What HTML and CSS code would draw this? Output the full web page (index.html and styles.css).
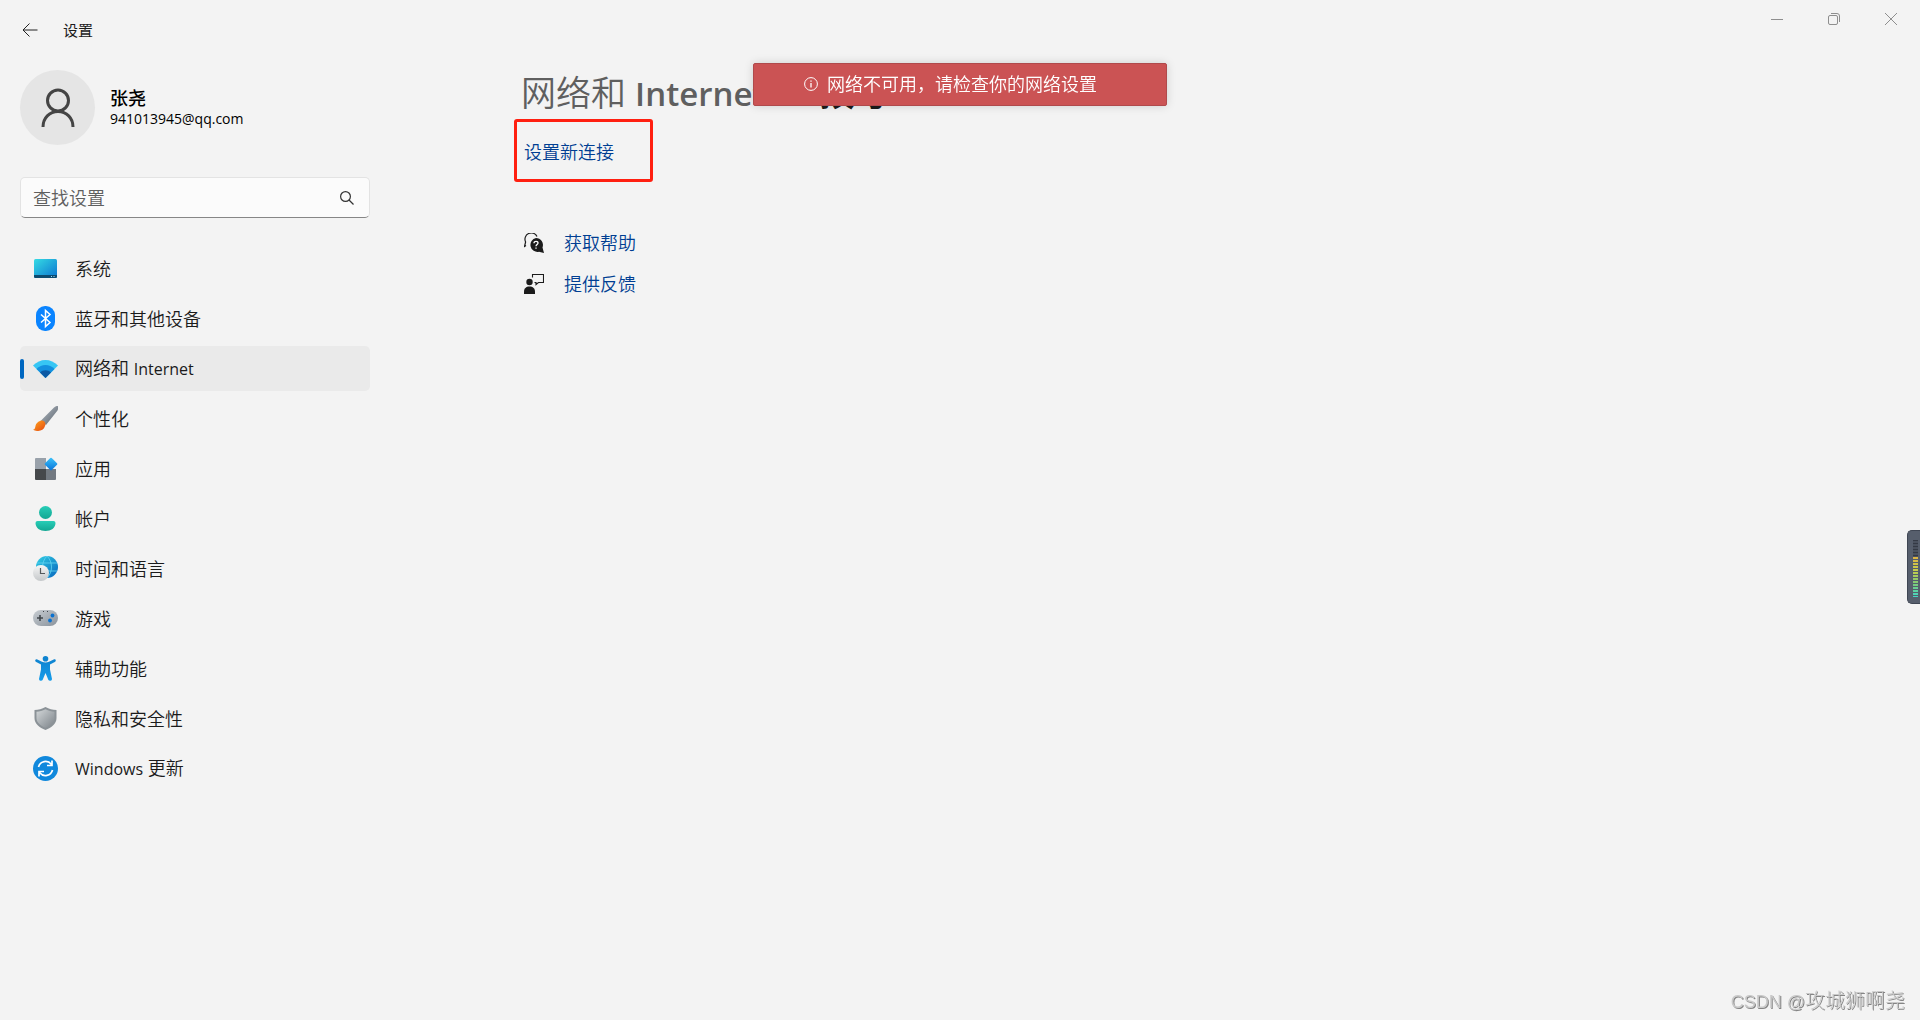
FILE: index.html
```html
<!DOCTYPE html>
<html lang="zh-CN">
<head>
    <meta charset="UTF-8">
    <meta name="viewport" content="width=device-width, initial-scale=1.0">
    <title>设置</title>
    <link rel="stylesheet" href="styles.css">
</head>
<body>
    <header class="titlebar">
        <button class="back" aria-label="返回">
            <svg width="16" height="14" viewBox="0 0 16 14" fill="none" stroke="#222"><path d="M15.500 7H1M7.500 0.500L1 7l6.500 6.500"/></svg>
        </button>
        <span class="appName">设置</span>
        <div class="controls">
            <button aria-label="最小化"><svg width="12" height="12" viewBox="0 0 12 12" fill="none" stroke="#8e8e8e"><path d="M0 6.500h12"/></svg></button>
            <button aria-label="还原"><svg width="12" height="12" viewBox="0 0 12 12" fill="none" stroke="#8e8e8e"><rect x=".5" y="2.500" width="9" height="9" rx="1.500"/><path d="M3 .500h6a2.500 2.500 0 0 1 2.500 2.500v6"/></svg></button>
            <button aria-label="关闭"><svg width="12" height="12" viewBox="0 0 12 12" fill="none" stroke="#8e8e8e"><path d="M0 0l12 12M12 0L0 12"/></svg></button>
        </div>
    </header>

    <div class="page">
        <aside class="sidebar">
            <div class="profile">
                <div class="avatar">
                    <svg width="34" height="40" viewBox="0 0 34 40" fill="none" stroke="#444" stroke-width="3"><circle cx="17" cy="12.500" r="10.500"/><path d="M2 39c0-9 6.500-15.500 15-15.500S32 30 32 39"/></svg>
                </div>
                <div>
                    <div class="userName">张尧</div>
                    <div class="email">941013945@qq.com</div>
                </div>
            </div>

            <label class="search">
                <input type="text" placeholder="查找设置" aria-label="查找设置">
                <svg width="14" height="14" viewBox="0 0 14 14" fill="none" stroke="#333" stroke-width="1.200"><circle cx="5.500" cy="5.500" r="4.900"/><path d="M9 9l4.500 4.500"/></svg>
            </label>

            <nav class="menu">
                <a href="#">
                    <svg class="icon" viewBox="0 0 25 25">
                        <defs><linearGradient id="sys" x1="0" y1="0" x2="1" y2="1"><stop offset="0" stop-color="#35dbe4"/><stop offset="1" stop-color="#0b74d0"/></linearGradient></defs>
                        <rect x="1" y="3" width="23" height="19" rx="1.500" fill="url(#sys)"/>
                        <path d="M1 19h23v1.500a1.500 1.500 0 0 1-1.500 1.500h-20A1.500 1.500 0 0 1 1 20.500z" fill="#0c4b70"/>
                        <path d="M18 20.500h1M20.500 20.500h1" stroke="#9fdcf5"/>
                    </svg>
                    <span>系统</span>
                </a>
                <a href="#">
                    <svg class="icon" viewBox="0 0 25 25">
                        <rect x="3" y="0" width="19" height="25" rx="9" fill="#0a84ff"/>
                        <path d="M8 8.500l9 8-4.500 4V4.500l4.500 4-9 8" fill="none" stroke="#fff" stroke-width="1.500"/>
                    </svg>
                    <span>蓝牙和其他设备</span>
                </a>
                <a href="#" class="active">
                    <svg class="icon" viewBox="0 0 25 25">
                        <path d="M0 9.500c7-7.500 18-7.500 25 0L12.500 22z" fill="#37c6f4"/>
                        <path d="M3.500 13c5-5.500 13-5.500 18 0l-9 9z" fill="#1490df"/>
                        <path d="M7 16.500c3-3 8-3 11 0L12.500 22z" fill="#0c59a4"/>
                    </svg>
                    <span>网络和 <span class="latin">Internet</span></span>
                </a>
                <a href="#">
                    <svg class="icon" viewBox="0 0 25 25">
                        <defs>
                            <linearGradient id="handle" x1="0" y1="0" x2="1" y2="1"><stop offset="0" stop-color="#b3bcc5"/><stop offset="1" stop-color="#59616a"/></linearGradient>
                            <linearGradient id="tip" x1="0" y1="0" x2="1" y2="1"><stop offset="0" stop-color="#ffa51d"/><stop offset="1" stop-color="#e54a13"/></linearGradient>
                        </defs>
                        <path d="M8 14.500L21 1.500Q24-.800 25 .300t-.500 4.200L13 19z" fill="url(#handle)"/>
                        <path d="M7 15c3.500-1.500 6.500 1.500 5 5-1.500 5.500-8.500 6-12 3.800 2.300-.500 2-2.300 2.600-4.300S4.500 16 7 15z" fill="url(#tip)"/>
                    </svg>
                    <span>个性化</span>
                </a>
                <a href="#">
                    <svg class="icon" viewBox="0 0 25 25">
                        <defs><linearGradient id="app" x1="0" y1="0" x2="1" y2="1"><stop offset="0" stop-color="#3cc3fa"/><stop offset="1" stop-color="#0872d8"/></linearGradient></defs>
                        <path d="M3 2h10v11H2V3a1 1 0 0 1 1-1z" fill="#99a1aa"/>
                        <path d="M2 13h11v11H3a1 1 0 0 1-1-1z" fill="#45484b"/>
                        <path d="M13 13h10v10a1 1 0 0 1-1 1h-9z" fill="#727981"/>
                        <rect x="13.300" y="3.300" width="9.500" height="9.500" rx="1" transform="rotate(45 18 8)" fill="url(#app)"/>
                    </svg>
                    <span>应用</span>
                </a>
                <a href="#">
                    <svg class="icon" viewBox="0 0 25 25">
                        <defs><linearGradient id="acc" x1="0" y1="0" x2="0" y2="1"><stop offset="0" stop-color="#28cdb7"/><stop offset="1" stop-color="#13a793"/></linearGradient></defs>
                        <circle cx="12.500" cy="6.500" r="6.500" fill="url(#acc)"/>
                        <path d="M4.500 15h16a2 2 0 0 1 2 2c0 5-4.500 8-10 8s-10-3-10-8a2 2 0 0 1 2-2z" fill="url(#acc)"/>
                    </svg>
                    <span>帐户</span>
                </a>
                <a href="#">
                    <svg class="icon" viewBox="0 0 25 25">
                        <defs>
                            <linearGradient id="globe" x1="0" y1="0" x2="1" y2="1"><stop offset="0" stop-color="#31d0e5"/><stop offset="1" stop-color="#0865bd"/></linearGradient>
                            <linearGradient id="clock" x1="0" y1="0" x2="0" y2="1"><stop offset="0" stop-color="#f6f6f6"/><stop offset="1" stop-color="#c5c8ca"/></linearGradient>
                        </defs>
                        <circle cx="14" cy="11" r="11" fill="url(#globe)"/>
                        <path d="M4 7h20M3 15h21M14 0c-6 6-6 16 0 22M14 0c6 6 6 16 0 22" fill="none" stroke="#64d5f3" stroke-width=".8"/>
                        <circle cx="8" cy="17" r="8" fill="url(#clock)"/>
                        <path d="M7.500 12v5.500H12" fill="none" stroke="#55595c" stroke-width="1.200"/>
                    </svg>
                    <span>时间和语言</span>
                </a>
                <a href="#">
                    <svg class="icon" viewBox="0 0 25 25">
                        <defs><linearGradient id="pad" x1="0" y1="0" x2="1" y2="1"><stop offset="0" stop-color="#c8cdd2"/><stop offset="1" stop-color="#89929b"/></linearGradient></defs>
                        <rect x="0" y="4" width="25" height="16" rx="8" fill="url(#pad)"/>
                        <path d="M4 12h6M7 9v6" stroke="#42474c" stroke-width="1.600"/>
                        <path d="M10 5.500h1M14 5.500h1" stroke="#42474c"/>
                        <circle cx="19.500" cy="9.500" r="1.900" fill="#0b72d0"/><circle cx="17" cy="14.500" r="1.900" fill="#0b72d0"/>
                    </svg>
                    <span>游戏</span>
                </a>
                <a href="#">
                    <svg class="icon" viewBox="0 0 25 25">
                        <defs><linearGradient id="man" x1="0" y1="0" x2="0" y2="1"><stop offset="0" stop-color="#0e83d0"/><stop offset="1" stop-color="#159cea"/></linearGradient></defs>
                        <circle cx="12.500" cy="2.800" r="2.800" fill="#0e83d0"/>
                        <path d="M3.800 3.200l5.200 2.600q3.500 1.200 7 0l5.200-2.600q1.500-.300 1.600 1t-1 1.800L17 8.600v5l2 9.400q0 1.600-1.500 1.800T15.400 24l-2.900-7-2.900 7q-.600 1-2.100.800T6 23l2-9.400v-5L3.200 6q-1.300-.700-1-1.800t1.600-1z" fill="url(#man)"/>
                    </svg>
                    <span>辅助功能</span>
                </a>
                <a href="#">
                    <svg class="icon" viewBox="0 0 25 25">
                        <defs><linearGradient id="shield" x1="0" y1="0" x2="1" y2="1"><stop offset="0" stop-color="#d3d7d9"/><stop offset="1" stop-color="#7c8389"/></linearGradient></defs>
                        <path d="M12.500 1c3.500 2 7 3 11 3v8c0 6-5 9.500-11 12C6.500 21.500 1.500 18 1.500 12V4c4 0 7.500-1 11-3z" fill="#8b9297"/>
                        <path d="M12.500 3.200c3 1.600 5.800 2.400 9 2.600V12c0 4.700-4 7.600-9 9.800-5-2.200-9-5.100-9-9.800V5.800c3.200-.200 6-1 9-2.600z" fill="url(#shield)"/>
                    </svg>
                    <span>隐私和安全性</span>
                </a>
                <a href="#">
                    <svg class="icon" viewBox="0 0 25 25">
                        <circle cx="12.500" cy="12.500" r="12.500" fill="#1088dc"/>
                        <path d="M5.500 11a7.300 7.300 0 0 1 12.800-2.800M19.500 14a7.300 7.300 0 0 1-12.800 2.800M19 4.500V9.500h-5M6 20.500v-5h5" fill="none" stroke="#fff" stroke-width="1.700"/>
                    </svg>
                    <span><span class="latin">Windows</span> 更新</span>
                </a>
            </nav>
        </aside>

        <main class="content">
            <h1><span class="parent">网络和 <b>Internet</b></span><span class="arrow">›</span><span class="current">拨号</span></h1>
            <div class="marked"><a href="#">设置新连接</a></div>
            <ul class="help">
                <li>
                    <svg width="20" height="20" viewBox="0 0 20 20">
                        <path d="M2 12.500L.500 13.500 1.600 9A6 6 0 0 1 13 3.500" fill="none" stroke="#1b1b1b" stroke-width="1.200"/>
                        <path d="M12 5a7 7 0 0 1 6.500 9.500L20 20l-5-1.200A7 7 0 1 1 12 5z" fill="#1b1b1b"/>
                        <path d="M10 10.200c0-2.600 4-2.400 4-.200 0 1.500-2 1.500-2 3.300M12 14.500v1.300" fill="none" stroke="#fff" stroke-width="1.300"/>
                    </svg>
                    <a href="#">获取帮助</a>
                </li>
                <li>
                    <svg width="20" height="20" viewBox="0 0 20 20">
                        <circle cx="5.500" cy="8" r="3.200" fill="#1b1b1b"/>
                        <path d="M0 20v-2.500C0 14.500 2 12.500 5.500 12.500S11 14.500 11 17.500V20z" fill="#1b1b1b"/>
                        <path d="M8.500 3.500v-3h11v8h-5l-2.500 2V8.500h-1.500" fill="none" stroke="#1b1b1b" stroke-width="1.100"/>
                    </svg>
                    <a href="#">提供反馈</a>
                </li>
            </ul>
        </main>
    </div>

    <div class="toast" role="alert">
        <svg width="14" height="14" viewBox="0 0 14 14" fill="none" stroke="#fff"><circle cx="7" cy="7" r="6.400"/><path d="M7 6v4.500M7 3.500v1.300" stroke-width="1.300"/></svg>
        网络不可用，请检查你的网络设置
    </div>

    <div class="meter"><div class="off"></div><div class="on"></div></div>
    <div class="watermark"><span class="site">CSDN @</span>攻城狮啊尧</div>
</body>
</html>
```

FILE: styles.css
```css
*{
    margin:0;
    padding:0;
    box-sizing:border-box;
}

body{
    min-height:100vh;
    background-color:#f3f3f3;
    color:#1b1b1b;
    font:350 18px/24px "Open Sans", "Noto Sans CJK SC", sans-serif;
}
a{
    color:#003e92;
    text-decoration:none;
}
button{
    display:flex;
    align-items:center;
    justify-content:center;
    border:none;
    background:none;
}
svg{
    flex-shrink:0;
}
.latin{
    font-size:16px;
    font-weight:400;
}

.titlebar{
    display:flex;
    align-items:center;
    height:60px;
    padding-left:20px;
}
.back{
    width:20px;
    height:30px;
}
.appName{
    margin-left:23px;
    font-size:15px;
    font-weight:400;
}
.controls{
    display:flex;
    align-self:flex-start;
    margin-left:auto;
    padding-right:1px;
}
.controls button{
    width:57px;
    height:38px;
}

.page{
    display:flex;
    gap:144px;
    padding:10px 20px;
}
.sidebar{
    flex:0 0 350px;
}
.profile{
    display:flex;
    align-items:center;
    gap:15px;
    margin-bottom:32px;
}
.avatar{
    display:flex;
    align-items:center;
    justify-content:center;
    width:75px;
    height:75px;
    border-radius:50%;
    background-color:#e5e5e5;
}
.userName{
    font-weight:500;
    color:#000;
    line-height:22px;
}
.email{
    font-size:14px;
    font-weight:400;
    line-height:20px;
    color:#000;
}
.search{
    display:flex;
    align-items:center;
    height:41px;
    margin-bottom:28px;
    padding:0 15px 0 12px;
    border:1px solid #e3e3e3;
    border-bottom-color:#868686;
    border-radius:5px;
    background-color:#fbfbfb;
}
.search input{
    flex:1;
    min-width:0;
    border:none;
    outline:none;
    background:none;
    font:inherit;
}
.search input::placeholder{
    color:#5f5f5f;
}

.menu{
    display:flex;
    flex-direction:column;
    gap:5px;
}
.menu a{
    position:relative;
    display:flex;
    align-items:center;
    gap:17px;
    height:45px;
    padding-left:13px;
    border-radius:5px;
    color:#1b1b1b;
}
.menu .active{
    background-color:#eaeaea;
}
.menu .active::before{
    content:"";
    position:absolute;
    left:0;
    top:13px;
    width:4px;
    height:20px;
    border-radius:2px;
    background-color:#0067c0;
}
.icon{
    width:25px;
    height:25px;
}

.content{
    flex:1;
}
h1{
    display:flex;
    height:49px;
    padding-left:7px;
    font-size:35px;
    font-weight:350;
    line-height:46px;
}
h1 b{
    font-size:33px;
    font-weight:600;
}
.parent{
    color:#5f5f5f;
}
.arrow{
    width:54px;
    text-align:center;
    color:#5f5f5f;
}
.current{
    font-weight:500;
}
.marked{
    display:flex;
    align-items:center;
    width:139px;
    height:63px;
    margin-bottom:40px;
    padding:2px 0 0 7px;
    border:3px solid #ff1f10;
    border-radius:3px;
}
.help{
    padding-left:10px;
    list-style:none;
}
.help li{
    display:flex;
    align-items:center;
    gap:20px;
    height:41px;
}

.toast{
    position:fixed;
    top:63px;
    left:50%;
    transform:translateX(-50%);
    display:flex;
    align-items:center;
    gap:9px;
    width:414px;
    height:43px;
    padding:0 0 1px 50px;
    border:1px solid #b04a4c;
    border-radius:2px;
    background-color:#cb5354;
    box-shadow:0 0 10px rgba(0, 0, 0, 0.15);
    color:#fff;
    white-space:nowrap;
}

.meter{
    position:fixed;
    right:0;
    top:530px;
    width:13px;
    height:74px;
    padding:9px 2px 8px 5px;
    border:1px solid #3f4653;
    border-right:none;
    border-radius:5px 0 0 5px;
    background-color:#565e6c;
}
.off{
    height:17px;
    background:repeating-linear-gradient(#343a45 0 1px, #4a515e 1px 3px);
}
.on{
    height:40px;
    background:repeating-linear-gradient(transparent 0 2px, #565e6c 2px 3px), linear-gradient(#dfb443, #c4cf4c 35%, #7fcb75 65%, #43d6c4);
}
.watermark{
    position:fixed;
    right:15px;
    bottom:5px;
    color:#c9c9c9;
    font:300 20px/26px "Liberation Sans", "Noto Sans CJK SC", sans-serif;
    text-shadow:1px 1px #858585;
}
.site{
    font-size:18px;
}
```
